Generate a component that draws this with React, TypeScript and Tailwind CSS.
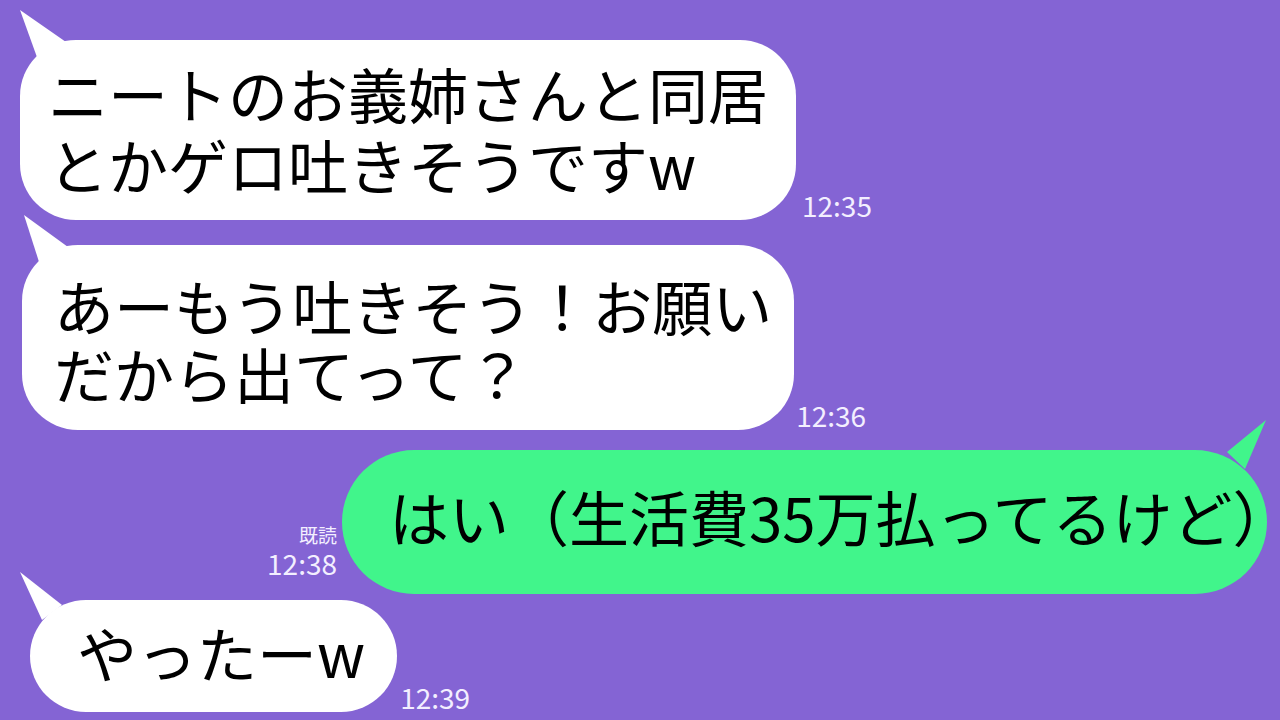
const jp = { fontFamily: '"Noto Sans CJK JP", "Noto Sans", sans-serif' };

function Tail({ className, points, color }: { className: string; points: string; color: string }) {
  return (
    <svg className={`absolute ${className}`} width="60" height="60" viewBox="0 0 60 60">
      <polygon points={points} fill={color} />
    </svg>
  );
}

function Time({ children }: { children: React.ReactNode }) {
  return <span className="text-[28px] leading-[30px] text-[#f3efff]">{children}</span>;
}

export default function App() {
  return (
    <div className="w-[1280px] h-[720px] overflow-hidden bg-[#8464d4] flex flex-col" style={jp}>
      {/* message 1 */}
      <div className="flex items-end gap-[6px] mt-[40px] ml-[20px]">
        <div className="relative bg-white rounded-[56px] pl-[28px] pr-[28px] pt-[17px] pb-[21px]">
          <Tail className="left-0 -top-[32px]" points="0,2 18,52 46,34" color="#ffffff" />
          <div className="text-[60px] leading-[71px] text-black whitespace-nowrap">
            <div>ニートのお義姉さんと同居</div>
            <div>とかゲロ吐きそうですw</div>
          </div>
        </div>
        <Time>12:35</Time>
      </div>

      {/* message 2 */}
      <div className="flex items-end gap-[2px] mt-[25px] ml-[22px]">
        <div className="relative bg-white rounded-[56px] pl-[32px] pr-[22px] pt-[26px] pb-[23px]">
          <Tail className="left-0 -top-[32px]" points="2,2 18,52 46,34" color="#ffffff" />
          <div className="text-[60px] leading-[68px] text-black whitespace-nowrap">
            <div>あーもう吐きそう！お願い</div>
            <div>だから出てって？</div>
          </div>
        </div>
        <Time>12:36</Time>
      </div>

      {/* message 3 (mine) */}
      <div className="flex items-end justify-end gap-[5px] mt-[20px] mr-[13px]">
        <div className="flex flex-col items-end mb-[16px]">
          <span className="text-[19px] leading-[26px] text-[#f3efff]">既読</span>
          <Time>12:38</Time>
        </div>
        <div className="relative bg-[#41f58b] rounded-[72px] w-[925px] h-[144px] pl-[47px] pt-[30px]">
          <Tail className="right-0 -top-[32px]" points="59,2 38,51 20,34" color="#41f58b" />
          <div className="text-[60px] leading-[71px] text-black whitespace-nowrap">
            はい（生活費35万払ってるけど）
          </div>
        </div>
      </div>

      {/* message 4 */}
      <div className="flex items-end gap-[3px] mt-[6px] ml-[30px]">
        <div className="relative bg-white rounded-[56px] h-[112px] pl-[47px] pr-[32px] pt-[16px]">
          <Tail className="-left-[10px] -top-[30px]" points="0,2 22,50 42,35" color="#ffffff" />
          <div className="text-[60px] leading-[71px] text-black whitespace-nowrap">やったーw</div>
        </div>
        <Time>12:39</Time>
      </div>
    </div>
  );
}
